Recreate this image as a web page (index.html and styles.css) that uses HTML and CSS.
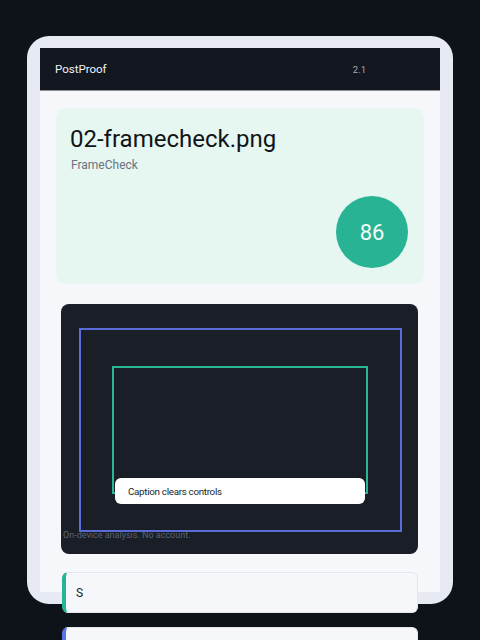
FILE: index.html
```html
<!DOCTYPE html>
<html>
<head>
<meta charset="utf-8">
<link rel="stylesheet" href="styles.css">
</head>
<body>
<div class="device">
  <div class="screen">
    <header class="topbar">
      <span class="brand">PostProof</span>
      <span class="version">2.1</span>
    </header>
    <section class="hero">
      <div class="hero-text">
        <h1 class="file-name">02-framecheck.png</h1>
        <p class="check-name">FrameCheck</p>
      </div>
      <div class="score">86</div>
    </section>
    <section class="preview">
      <div class="safe-outer"></div>
      <div class="safe-inner"></div>
      <div class="caption">Caption clears controls</div>
      <p class="privacy">On-device analysis. No account.</p>
    </section>
    <div class="finding finding-teal"><span>S</span></div>
    <div class="finding finding-blue"><span></span></div>
  </div>
</div>
</body>
</html>
```

FILE: styles.css
```css
* { box-sizing: border-box; }
html, body { margin: 0; padding: 0; }
body {
  background: #0e1219;
  font-family: Roboto, "Noto Sans", sans-serif;
  width: 480px;
  height: 640px;
  overflow: hidden;
}
.device {
  margin: 36px 27px 0;
  height: 568px;
  background: #e7eaf2;
  border-radius: 22px;
  padding: 12px 13px;
}
.screen {
  background: #f6f7fa;
  height: 544px;
}
.topbar {
  height: 43px;
  background: #121720;
  display: flex;
  align-items: center;
  padding: 0 15px;
  border-bottom: 1px solid #8a9099;
}
.brand {
  color: #f2f4f7;
  font-size: 11.5px;
  flex: 1;
}
.version {
  color: #a3a9b3;
  font-size: 9.5px;
  margin-right: 59px;
}
.hero {
  margin: 17px 16px 0;
  height: 176px;
  background: #e6f7f2;
  border-radius: 10px;
  padding: 17px 16px 16px 14px;
  display: flex;
  flex-direction: column;
}
.hero-text { flex: 1; }
.file-name {
  margin: 0;
  font-weight: 400;
  font-size: 24px;
  line-height: 28px;
  color: #111418;
}
.check-name {
  margin: 5px 0 0 1px;
  font-size: 12px;
  color: #6b7280;
}
.score {
  align-self: flex-end;
  width: 72px;
  height: 72px;
  border-radius: 50%;
  background: #27b394;
  color: #f4fbf8;
  font-size: 22px;
  display: flex;
  align-items: center;
  justify-content: center;
}
.preview {
  position: relative;
  margin: 20px 22px 0 21px;
  height: 250px;
  background: #1a1f27;
  border-radius: 8px;
}
.safe-outer {
  position: absolute;
  left: 18px;
  top: 24px;
  width: 323px;
  height: 204px;
  border: 2px solid #5b6bd8;
}
.safe-inner {
  position: absolute;
  left: 51px;
  top: 62px;
  width: 256px;
  height: 128px;
  border: 2px solid #2bb592;
}
.caption {
  position: absolute;
  left: 54px;
  top: 174px;
  width: 250px;
  height: 26px;
  background: #ffffff;
  border-radius: 6px;
  font-size: 9.8px;
  letter-spacing: -0.3px;
  color: #1a1f27;
  padding-left: 13px;
  display: flex;
  align-items: center;
}
.privacy {
  position: absolute;
  left: 2px;
  top: 226px;
  margin: 0;
  font-size: 9px;
  color: #5b6270;
}
.finding {
  margin: 18px 22px 0 22px;
  height: 41px;
  background: #f6f7fa;
  border: 1px solid #e3e6ec;
  border-left: 4px solid #27b394;
  border-radius: 6px;
  display: flex;
  align-items: center;
  padding-left: 10px;
  font-size: 12px;
  color: #1a1f27;
}
.finding-blue {
  margin-top: 14px;
  border-left-color: #5b73e8;
}
```
